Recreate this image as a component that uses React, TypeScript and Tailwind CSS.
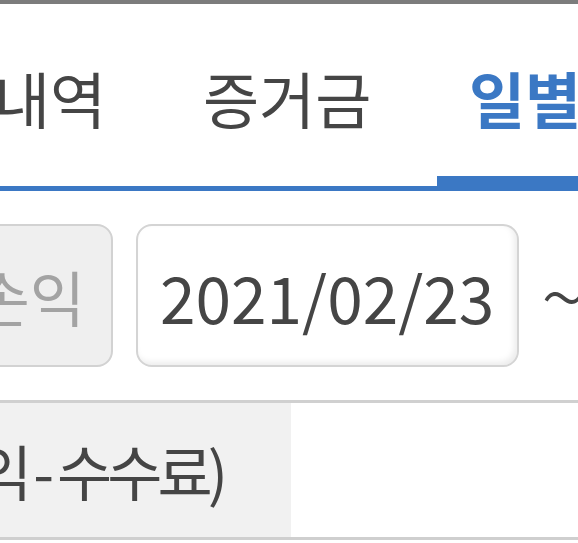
import React from 'react';

const App: React.FC = () => {
  return (
    <div
      className="w-[578px] h-[543px] overflow-hidden bg-white text-[#454545]"
      style={{ fontFamily: '"Noto Sans CJK KR", "Noto Sans", sans-serif' }}
    >
      <div className="h-[4px] bg-[#7c7c7c]" />

      {/* tabs */}
      <div className="flex h-[182px] whitespace-nowrap text-[61px] leading-none">
        <div className="w-[209px] shrink-0 pt-[63px] -ml-[6px]">내역</div>
        <div className="w-[234px] shrink-0 pt-[63px]">증거금</div>
        <div className="flex-1 pt-[63px] pl-[32px] border-b-[10px] border-[#3b78c4] font-bold text-[#3b78c4]">
          일별손익
        </div>
      </div>
      <div className="h-[5px] bg-[#3b78c4]" />

      {/* date filter */}
      <div className="flex items-center h-[212px] whitespace-nowrap border-b-[3px] border-[#d0d0d0] pb-[33px] pt-[33px]">
        <div className="-ml-[87px] w-[200px] h-[143px] shrink-0 flex items-center justify-end pr-[26px] rounded-[16px] border-2 border-[#d2d2d2] bg-[#efefef] text-[60px] text-[#a3a3a3]">
          일별손익
        </div>
        <div className="ml-[23px] w-[383px] h-[143px] shrink-0 flex items-center pl-[22px] rounded-[16px] border-2 border-[#d4d4d4] bg-white shadow-[inset_-3px_-3px_6px_rgba(0,0,0,0.08)] text-[64px]">
          2021/02/23
        </div>
        <div className="ml-[22px] text-[84px] font-light leading-none -mt-[6px]">~</div>
      </div>

      {/* summary row */}
      <div className="flex h-[137px] border-b-[3px] border-[#cfcfcf]">
        <div className="w-[291px] shrink-0 flex items-center justify-end pr-[68px] bg-[#f1f1f1] whitespace-nowrap text-[60px] tracking-[-5px]">
          <span>(손익</span>
          <span className="pl-[6px] pr-[8px]">-</span>
          <span>수수료)</span>
        </div>
        <div className="flex-1 bg-white" />
      </div>
    </div>
  );
};

export default App;
